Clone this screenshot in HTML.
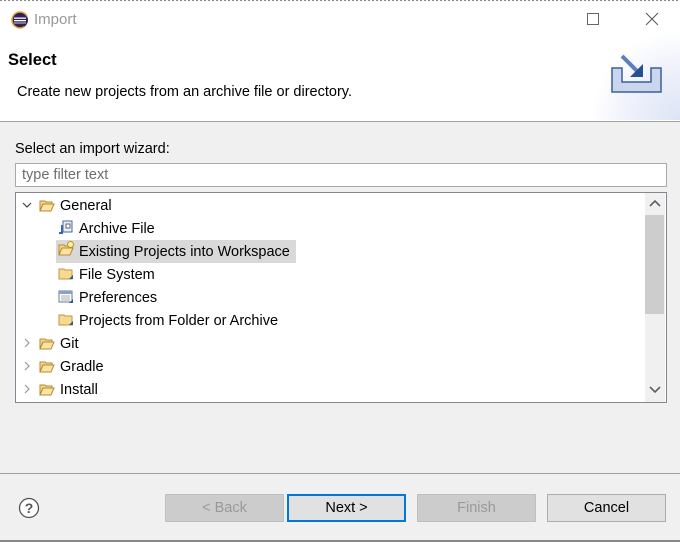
<!DOCTYPE html>
<html><head><style>
*{margin:0;padding:0;box-sizing:border-box}
body{width:680px;height:542px;background:#f0f0f0;font-family:"Liberation Sans",sans-serif;font-size:14.5px;color:#000;position:relative;overflow:hidden}
.abs{position:absolute}
.row{position:absolute;height:22px;line-height:24px;white-space:nowrap}
.btn{position:absolute;top:494px;height:28px;width:119px;border:1px solid #adadad;background:#e1e1e1;text-align:center;line-height:27px;font-size:14.5px}
</style></head><body>
<div class="abs" style="left:0;top:0;width:680px;height:1px;background:repeating-linear-gradient(90deg,#888 0 2px,#fff 2px 4px)"></div>
<div class="abs" style="left:0;top:1px;width:680px;height:120px;background:#fff"></div>
<svg class="abs" style="left:11px;top:11px" width="18" height="18" viewBox="0 0 18 18"><circle cx="9" cy="9" r="8" fill="#2c2255"/><circle cx="9" cy="9" r="8" fill="none" stroke="#e8a040" stroke-width="1.5" stroke-dasharray="0 8 30"/><rect x="3" y="6.5" width="12" height="1.3" fill="#fff"/><rect x="3" y="9" width="12" height="1.3" fill="#fff"/><rect x="3" y="11.5" width="12" height="1" fill="#ccc"/></svg>
<div class="abs" style="left:34px;top:11px;font-size:15px;color:#999">Import</div>
<div class="abs" style="left:587px;top:13px;width:12px;height:12px;border:1px solid #666"></div>
<svg class="abs" style="left:645px;top:12px" width="14" height="14"><path d="M1 1L13 13M13 1L1 13" stroke="#555" stroke-width="1"/></svg>
<div class="abs" style="left:8px;top:51px;font-weight:bold;font-size:16.5px">Select</div>
<div class="abs" style="left:17px;top:84px">Create new projects from an archive file or directory.</div>
<div class="abs" style="left:590px;top:30px;width:90px;height:90px;background:radial-gradient(ellipse at 100% 100%,#dde4f5 0%,#eef1fb 40%,#fff 70%)"></div>
<svg class="abs" style="left:610px;top:53px" width="58" height="42" viewBox="0 0 58 42"><path d="M2 15H12V29H41V15H51V39H2Z" fill="#c9d6ec" stroke="#3a5fa0" stroke-width="1.5"/><path d="M12 3L28 19" stroke="#5a7fc0" stroke-width="4"/><path d="M20 24H33V11Z" fill="#2a4f90"/></svg>
<div class="abs" style="left:0;top:121px;width:680px;height:1px;background:#a0a0a0"></div>
<div class="abs" style="left:15px;top:141px">Select an import wizard:</div>
<div class="abs" style="left:15px;top:163px;width:652px;height:24px;background:#fff;border:1px solid #a9a9a9;color:#6d6d6d;padding-left:6px;line-height:23px">type filter text</div>
<div class="abs" style="left:15px;top:192px;width:652px;height:211px;background:#fff;border:1px solid #828790"></div>
<div class="abs" style="left:645px;top:193px;width:20px;height:209px;background:#f0f0f0"></div>
<div class="abs" style="left:645px;top:215px;width:19px;height:99px;background:#cdcdcd"></div>
<svg class="abs" style="left:648px;top:199px" width="14" height="10"><path d="M2 7L7 2L12 7" stroke="#606060" stroke-width="1.6" fill="none"/></svg>
<svg class="abs" style="left:648px;top:385px" width="14" height="10"><path d="M2 2L7 7L12 2" stroke="#606060" stroke-width="1.6" fill="none"/></svg>
<div class="abs" style="left:56px;top:240px;width:240px;height:23px;background:#d9d9d9"></div>
<svg width="0" height="0" style="position:absolute"><defs>
<symbol id="of" viewBox="0 0 16 14"><path d="M1 2H6L7 3H13V5H4L1 12Z" fill="#f5d58a" stroke="#b88a30"/><path d="M1 12L4 5H15L12 12Z" fill="#fbe3a4" stroke="#b88a30"/></symbol>
<symbol id="cf" viewBox="0 0 16 14"><path d="M1 2H6L7 3H14V12H1Z" fill="#f8d98f" stroke="#c09540"/><path d="M11 12L15 8V12Z" fill="#2a5aa0"/></symbol>
</defs></svg>
<svg class="abs" style="left:22px;top:200px" width="10" height="10"><path d="M1 3L5 7L9 3" stroke="#444" fill="none" stroke-width="1.2"/></svg>
<svg class="abs" style="left:39px;top:199px" width="16" height="14"><use href="#of"/></svg>
<div class="row" style="left:60px;top:194px">General</div>
<svg class="abs" style="left:58px;top:220px" width="16" height="16" viewBox="0 0 16 16"><rect x="5" y="1" width="9" height="11" fill="#e8eef8" stroke="#4a6a9a"/><rect x="8" y="4" width="4" height="4" fill="#fff" stroke="#666"/><path d="M4 5V13H1" stroke="#3a68b0" stroke-width="2" fill="none"/></svg>
<div class="row" style="left:79px;top:217px">Archive File</div>
<svg class="abs" style="left:58px;top:243px" width="16" height="14"><use href="#of"/></svg>
<svg class="abs" style="left:66px;top:240px" width="9" height="9"><circle cx="4.5" cy="4.5" r="3" fill="#fff3a0" stroke="#c09020"/></svg>
<div class="row" style="left:79px;top:240px">Existing Projects into Workspace</div>
<svg class="abs" style="left:58px;top:267px" width="16" height="14"><use href="#cf"/></svg>
<div class="row" style="left:79px;top:263px">File System</div>
<svg class="abs" style="left:58px;top:290px" width="16" height="14" viewBox="0 0 16 14"><rect x="1" y="1" width="13" height="11" fill="#fff" stroke="#6a7a9a"/><rect x="1" y="1" width="13" height="3" fill="#8aa0c8"/><path d="M3 6H12M3 8H12M3 10H12" stroke="#aab"/><path d="M11 13L15 9V13Z" fill="#2a5aa0"/></svg>
<div class="row" style="left:79px;top:286px">Preferences</div>
<svg class="abs" style="left:58px;top:313px" width="16" height="14"><use href="#cf"/></svg>
<div class="row" style="left:79px;top:309px">Projects from Folder or Archive</div>
<svg class="abs" style="left:22px;top:338px" width="10" height="10"><path d="M3 1L7 5L3 9" stroke="#999" fill="none" stroke-width="1.2"/></svg>
<svg class="abs" style="left:39px;top:337px" width="16" height="14"><use href="#of"/></svg>
<div class="row" style="left:60px;top:332px">Git</div>
<svg class="abs" style="left:22px;top:361px" width="10" height="10"><path d="M3 1L7 5L3 9" stroke="#999" fill="none" stroke-width="1.2"/></svg>
<svg class="abs" style="left:39px;top:360px" width="16" height="14"><use href="#of"/></svg>
<div class="row" style="left:60px;top:355px">Gradle</div>
<svg class="abs" style="left:22px;top:384px" width="10" height="10"><path d="M3 1L7 5L3 9" stroke="#999" fill="none" stroke-width="1.2"/></svg>
<svg class="abs" style="left:39px;top:383px" width="16" height="14"><use href="#of"/></svg>
<div class="row" style="left:60px;top:378px">Install</div>
<div class="abs" style="left:0;top:473px;width:680px;height:1px;background:#a0a0a0"></div>
<svg class="abs" style="left:17px;top:496px" width="24" height="24"><circle cx="12" cy="12" r="9.5" fill="#fff" stroke="#555" stroke-width="1.3"/><text x="12" y="17" text-anchor="middle" font-family="Liberation Sans" font-size="14" font-weight="bold" fill="#555">?</text></svg>
<div class="btn" style="left:165px;background:#ccc;border-color:#bfbfbf;color:#999">&lt; Back</div>
<div class="btn" style="left:287px;border:2px solid #0078d7;line-height:25px">Next &gt;</div>
<div class="btn" style="left:417px;background:#ccc;border-color:#bfbfbf;color:#999">Finish</div>
<div class="btn" style="left:547px">Cancel</div>
<div class="abs" style="left:0;top:540px;width:680px;height:2px;background:#888"></div>
</body></html>
